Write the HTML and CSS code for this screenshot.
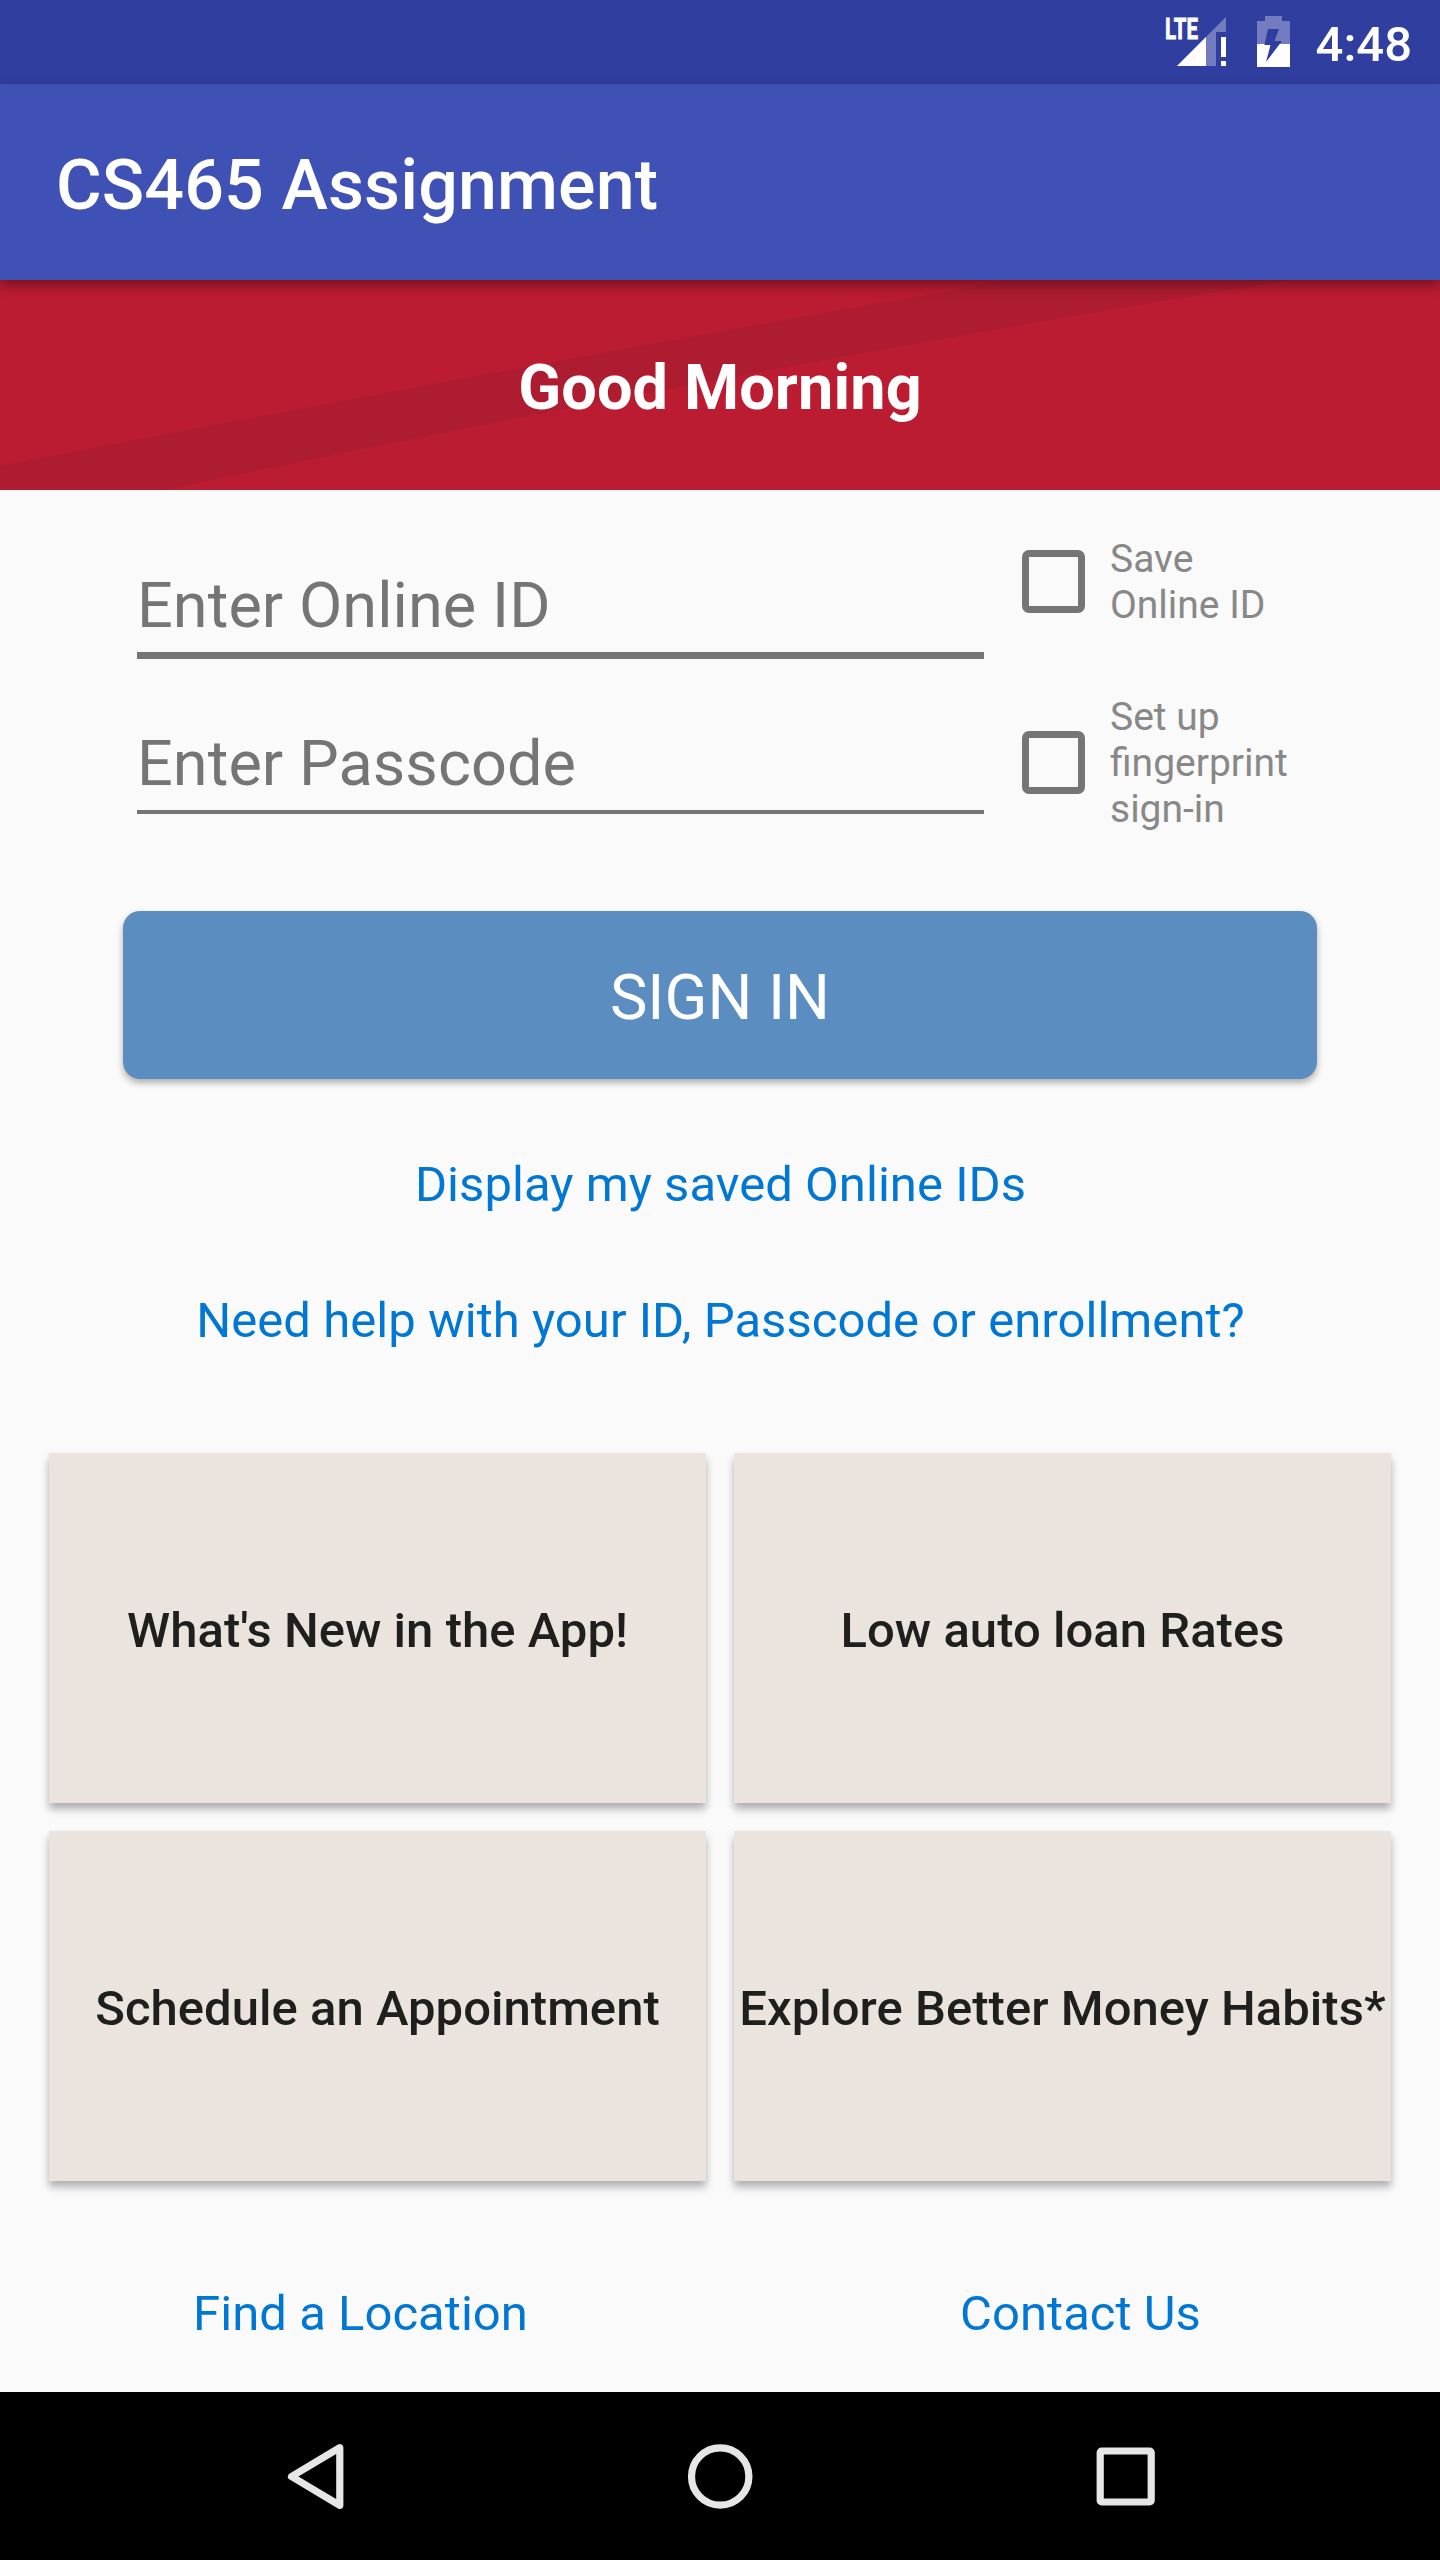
FILE: index.html
```html
<!DOCTYPE html>
<html lang="en">
<head>
<meta charset="utf-8">
<title>CS465 Assignment</title>
<link rel="stylesheet" href="styles.css">
</head>
<body>
<div class="screen">
  <div class="status-bar">
    <svg class="signal" width="62" height="50" viewBox="0 0 62 50">
      <text class="lte" x="0" y="22" textLength="33" lengthAdjust="spacingAndGlyphs">LTE</text>
      <path d="M12 49L61 0V15H51V49Z" fill="#fff" fill-opacity=".32"/>
      <path d="M12 49L41 20V49Z" fill="#fff"/>
      <path d="M56 20h5v20h-5zM56 44h5v5h-5z" fill="#fff"/>
    </svg>
    <svg class="battery" width="33" height="51" viewBox="0 0 33 51">
      <path d="M8 0H25V5H33V28H0V5H8Z" fill="#fff" fill-opacity=".32"/>
      <path d="M0 28H33V51H0Z" fill="#fff"/>
      <path d="M11 13H22L17.500 25H25L9 46L13.500 29H7.500Z" fill="#303f9f"/>
    </svg>
    <span class="clock">4:48</span>
  </div>
  <header class="app-bar"><h1 class="app-title">CS465 Assignment</h1></header>
  <section class="banner">
    <svg class="banner-stripe" viewBox="0 0 1440 210" preserveAspectRatio="none"><path d="M0 186Q510 88 1010 0H1290Q730 90 165 210H0Z" fill="#ae1c31"/></svg>
    <h2 class="greeting">Good Morning</h2>
  </section>
  <main class="content">
    <form class="login">
      <div class="fields">
        <div class="field field-active">Enter Online ID</div>
        <div class="field">Enter Passcode</div>
      </div>
      <div class="options">
        <label class="option"><span class="box"></span><span class="option-text">Save<br>Online ID</span></label>
        <label class="option"><span class="box"></span><span class="option-text">Set up<br>fingerprint<br>sign-in</span></label>
      </div>
    </form>
    <button class="sign-in" type="button">SIGN IN</button>
    <a class="link link-saved">Display my saved Online IDs</a>
    <a class="link link-help">Need help with your ID, Passcode or enrollment?</a>
    <div class="tiles">
      <div class="tile">What's New in the App!</div>
      <div class="tile">Low auto loan Rates</div>
      <div class="tile">Schedule an Appointment</div>
      <div class="tile">Explore Better Money Habits*</div>
    </div>
    <div class="footer-links">
      <a class="link">Find a Location</a>
      <a class="link">Contact Us</a>
    </div>
  </main>
  <nav class="nav-bar">
    <svg width="80" height="80" viewBox="0 0 80 80"><path d="M64.800 11.700V69.300L16.500 40.500Z"/></svg>
    <svg width="80" height="80" viewBox="0 0 80 80"><circle cx="40.200" cy="40.500" r="28.700"/></svg>
    <svg width="80" height="80" viewBox="0 0 80 80"><rect x="15.200" y="15" width="51" height="51" rx="1.500"/></svg>
  </nav>
</div>
</body>
</html>
```
FILE: styles.css
```css
* { box-sizing: border-box; }
body { margin: 0; font-family: Roboto, sans-serif; background: #fafafa; }
.screen { width: 1440px; height: 2560px; display: flex; flex-direction: column; overflow: hidden; }

.status-bar { height: 84px; flex: none; background: #303f9f; display: flex; align-items: flex-start; justify-content: flex-end; padding: 16px 28px 0 0; }
.signal { margin: 1px 30px 0 0; overflow: visible; }
.battery { margin-right: 26px; }
.lte { font: 700 30px Roboto, sans-serif; fill: #fff; stroke: #fff; stroke-width: .8px; }
.clock { font-size: 49px; font-weight: 500; line-height: 57px; color: #fff; }

.app-bar { height: 196px; flex: none; background: #3f51b5; display: flex; align-items: center; padding: 6px 56px 0; box-shadow: 0 5px 12px rgba(0, 0, 0, .38); z-index: 1; }
.app-title { margin: 0; font-size: 70px; font-weight: 500; line-height: 82px; letter-spacing: .1px; color: #fff; }

.banner { height: 210px; flex: none; position: relative; background: #bb1c32; display: flex; align-items: center; justify-content: center; }
.banner-stripe { position: absolute; inset: 0; width: 100%; height: 100%; }
.greeting { position: relative; margin: 0; font-size: 63px; font-weight: 700; line-height: 74px; letter-spacing: .1px; color: #fff; padding-top: 5px; }

.content { flex: 1; display: flex; flex-direction: column; }
.login { display: flex; padding: 44px 100px 0 137px; }
.fields { width: 847px; padding-top: 34px; }
.field { height: 91px; padding-top: 4px; margin-bottom: 31px; font-size: 63px; line-height: 74px; letter-spacing: .06px; color: #757575; border-bottom: 4px solid #757575; }
.field-active { padding-top: 1px; border-bottom-width: 7px; margin-bottom: 64px; }
.options { padding: 1px 0 0 38px; }
.option { display: flex; align-items: center; gap: 25px; font-size: 39px; line-height: 46px; color: #888; }
.option + .option { margin-top: 66px; }
.option-text { margin: 1px 0 -1px; }
.box { width: 63px; height: 63px; border: 7px solid #757575; border-radius: 7px; flex: none; }

.sign-in { margin: 66px auto 0; width: 1194px; height: 168px; border: 0; border-radius: 17px; background: #5b8dc1; color: #fff; font: 400 63px/74px Roboto, sans-serif; padding: 5px 0 0; box-shadow: 0 4px 7px rgba(0, 0, 0, .3); }
.link { font-size: 49px; line-height: 58px; letter-spacing: .04px; color: #0077d4; text-align: center; padding-left: 1px; }
.link-saved { margin-top: 77px; }
.link-help { margin-top: 78px; }

.tiles { margin: 103px 49px 0; display: grid; grid-template-columns: 657px 657px; grid-auto-rows: 350px; gap: 28px; }
.tile { background: #ebe3dd; display: flex; align-items: center; justify-content: center; padding-top: 4px; font-size: 49px; font-weight: 500; letter-spacing: .03px; color: #1f1f1d; white-space: nowrap; box-shadow: 0 6px 8px rgba(0, 0, 0, .3); }
.footer-links { margin-top: 104px; display: grid; grid-template-columns: 1fr 1fr; }

.nav-bar { height: 168px; flex: none; background: #000; display: flex; justify-content: center; align-items: center; gap: 325px; }
.nav-bar svg { fill: none; stroke: #e6e6e6; stroke-width: 7.200; stroke-linejoin: round; }
```
